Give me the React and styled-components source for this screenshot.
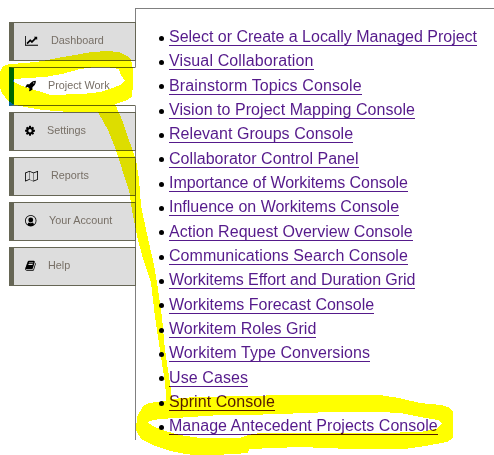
import React from "react";
import styled, { createGlobalStyle } from "styled-components";

const GlobalStyle = createGlobalStyle`
  * { box-sizing: border-box; }
  body { margin: 0; background: #fff; overflow: hidden; }
`;

const Page = styled.div`
  position: relative;
  display: flex;
  align-items: flex-start;
  width: 494px;
  height: 455px;
  padding: 8px 0 0 9px;
  overflow: hidden;
  background: #fff;
  font-family: "Liberation Sans", Arial, sans-serif;
`;

const Tabs = styled.nav`
  display: flex;
  flex-direction: column;
  gap: 6px;
  flex: none;
  width: 127px;
  margin: 14px -1px 0 0;
  z-index: 1;
`;

const Tab = styled.a`
  display: flex;
  align-items: center;
  height: 39px;
  padding: 0 0 2px 11px;
  border: 1px solid #666655;
  border-left: 5px solid ${(p) => (p.$active ? "#0065a0" : "#666655")};
  border-right-color: ${(p) => (p.$active ? "#fff" : "#666655")};
  background: ${(p) => (p.$active ? "#fff" : "#ddd")};
  color: #776f66;
  font-size: 10.8px;
  line-height: 13px;
  text-decoration: none;
  white-space: nowrap;
`;

const TabIcon = styled.svg`
  flex: none;
  width: ${(p) => p.$width}px;
  height: 11.5px;
  margin-right: ${(p) => p.$gap}px;
  fill: #000;
  overflow: visible;
`;

const Panel = styled.main`
  flex: 1;
  height: 432px;
  padding-top: 16.1px;
  border-top: 1px solid #808080;
  border-left: 1px solid #808080;
`;

const LinkList = styled.ul`
  margin: 0;
  padding: 0 0 0 33px;
  list-style: none;
`;

const LinkRow = styled.li`
  position: relative;
  height: 24.34px;
  font-size: 16px;
  line-height: 24px;
  white-space: nowrap;

  &::before {
    content: "";
    position: absolute;
    left: -10px;
    top: 10.6px;
    width: 5px;
    height: 5px;
    border-radius: 50%;
    background: #000;
  }
`;

const ConsoleLink = styled.a`
  color: #551a8b;
  letter-spacing: ${(p) => p.$tracking || 0}px;
  text-decoration: none;
  border-bottom: 1px solid #551a8b;
`;

const Marker = styled.svg`
  position: absolute;
  inset: 0;
  width: 494px;
  height: 455px;
  z-index: 2;
  pointer-events: none;
  mix-blend-mode: multiply;
`;

const tabs = [
  {
    label: "Dashboard",
    box: "0 0 2048 1792",
    width: 13,
    gap: 13,
    path: "M2048 1536v128h-2048v-1536h128v1408h1920zm-128-1248v435q0 21-19.5 29.5t-35.5-7.5l-121-121-633 633q-10 10-23 10t-23-10l-233-233-416 416-192-192 585-585q10-10 23-10t23 10l233 233 464-464-121-121q-16-16-7.5-35.5t29.5-19.5h435q14 0 23 9t9 23z",
  },
  {
    label: "Project Work",
    box: "0 0 1664 1792",
    width: 11,
    gap: 12,
    active: true,
    path: "M1440 448q0-40-28-68t-68-28-68 28-28 68 28 68 68 28 68-28 28-68zm224-288q0 249-75.5 430.5t-253.5 360.5q-81 80-195 176l-20 379q-2 16-16 26l-384 224q-7 4-16 4-12 0-23-9l-64-64q-13-14-8-32l85-276-281-281-276 85q-3 1-9 1-14 0-23-9l-64-64q-17-19-5-39l224-384q10-14 26-16l379-20q96-114 176-195 188-187 358-258t431-71q14 0 24 9.5t10 22.5z",
  },
  {
    label: "Settings",
    box: "128 0 1536 1792",
    width: 10,
    gap: 12,
    path: "M1152 896q0-106-75-181t-181-75-181 75-75 181 75 181 181 75 181-75 75-181zm512-109v222q0 12-8 23t-20 13l-185 28q-19 54-39 91 35 50 107 138 10 12 10 25t-9 23q-27 37-99 108t-94 71q-12 0-26-9l-138-108q-44 23-91 38-16 136-29 186-7 28-36 28h-222q-14 0-24.5-8.5t-11.5-21.5l-28-184q-49-16-90-37l-141 107q-10 9-25 9-14 0-25-11-126-114-165-168-7-10-7-23 0-12 8-23 15-21 51-66.5t54-70.5q-27-50-41-99l-183-27q-13-2-21-12.5t-8-23.5v-222q0-12 8-23t19-13l186-28q14-46 39-92-40-57-107-138-10-12-10-24 0-10 9-23 26-36 98.5-107.5t94.5-71.5q13 0 26 10l138 107q44-23 91-38 16-136 29-186 7-28 36-28h222q14 0 24.5 8.5t11.5 21.5l28 184q49 16 90 37l142-107q9-9 24-9 13 0 25 10 129 119 165 170 7 8 7 22 0 12-8 23-15 21-51 66.5t-54 70.5q26 50 41 98l183 28q13 2 21 12.5t8 23.5z",
  },
  {
    label: "Reports",
    box: "0 0 2048 1792",
    width: 13,
    gap: 13,
    path: "M2020 139q28 20 28 53v1280q0 44-40 59l-640 256q-24 11-48 0l-616-246-616 246q-10 5-24 5-19 0-36-11-28-20-28-53V448q0-44 40-59l640-256q24-11 48 0l616 246 616-246q32-13 60 6zM736 270v1210l576 230V500zM128 491v1142l544-217V274zm1792 938V287l-544 217v1142z",
  },
  {
    label: "Your Account",
    box: "0 0 1792 1792",
    width: 11.5,
    gap: 12.5,
    path: "M896 0a896 896 0 1 0 0 1792a896 896 0 1 0 0-1792zM1399 1478q-65-310-254-310q-102 108-249 108t-249-108q-189 0-254 310A768 768 0 1 1 1399 1478zM1280 768a384 384 0 1 0-768 0a384 384 0 1 0 768 0z",
  },
  {
    label: "Help",
    box: "0 0 1664 1792",
    width: 11,
    gap: 12,
    path: "M1639 478q40 57 18 129l-275 906q-19 64-76.5 107.5t-122.5 43.5h-923q-77 0-148.5-53.5t-99.5-131.5q-24-67-2-127 0-4 3-27t4-37q1-8-3-21.5t-3-19.5q2-11 8-21t16.5-23.5 16.5-23.5q23-38 45-91.5t30-91.5q3-10 .5-30t-.5-28q3-11 17-28t17-23q21-36 42-92t25-90q1-9-2.5-32t.5-28q4-13 22-30.5t22-22.5q19-26 42.5-84.5t27.5-96.5q1-8-3-25.5t-2-26.5q2-8 9-18t18-23 17-21q8-12 16.5-30.5t15-35 16-36 19.5-32 26.5-23.5 36-11.5 47.5 5.5l-1 3q38-9 51-9h761q74 0 114 56t18 130l-274 906q-36 119-71.5 153.5t-128.5 34.5h-869q-27 0-38 15-11 16-1 43 24 70 144 70h923q29 0 56-15.5t35-41.5l300-987q7-22 5-57 38 15 59 43zm-1064 2q-4 13 2 22.5t20 9.5h608q13 0 25.5-9.5t16.5-22.5l21-64q4-13-2-22.5t-20-9.5h-608q-13 0-25.5 9.5t-16.5 22.5zm-83 256q-4 13 2 22.5t20 9.5h608q13 0 25.5-9.5t16.5-22.5l21-64q4-13-2-22.5t-20-9.5h-608q-13 0-25.5 9.5t-16.5 22.5z",
  },
];

const links = [
  { text: "Select or Create a Locally Managed Project", tracking: -0.015 },
  { text: "Visual Collaboration", tracking: 0.13 },
  { text: "Brainstorm Topics Console", tracking: 0.11 },
  { text: "Vision to Project Mapping Console", tracking: 0.05 },
  { text: "Relevant Groups Console", tracking: 0.04 },
  { text: "Collaborator Control Panel", tracking: 0.04 },
  { text: "Importance of Workitems Console", tracking: -0.06 },
  { text: "Influence on Workitems Console" },
  { text: "Action Request Overview Console", tracking: 0.03 },
  { text: "Communications Search Console", tracking: 0.05 },
  { text: "Workitems Effort and Duration Grid", tracking: -0.06 },
  { text: "Workitems Forecast Console" },
  { text: "Workitem Roles Grid" },
  { text: "Workitem Type Conversions", tracking: 0.06 },
  { text: "Use Cases", tracking: 0.1 },
  { text: "Sprint Console", tracking: 0.07 },
  { text: "Manage Antecedent Projects Console", tracking: 0.03 },
];

export default function App() {
  return (
    <Page>
      <GlobalStyle />
      <Tabs>
        {tabs.map((t) => (
          <Tab key={t.label} $active={t.active}>
            <TabIcon viewBox={t.box} $width={t.width} $gap={t.gap} aria-hidden="true">
              <path d={t.path} fillRule="evenodd" />
            </TabIcon>
            {t.label}
          </Tab>
        ))}
      </Tabs>
      <Panel>
        <LinkList>
          {links.map((link) => (
            <LinkRow key={link.text}>
              <ConsoleLink $tracking={link.tracking}>{link.text}</ConsoleLink>
            </LinkRow>
          ))}
        </LinkList>
      </Panel>
      <Marker viewBox="0 0 494 455" shapeRendering="crispEdges" aria-hidden="true">
        <g fill="#ff0" fillRule="evenodd">
          <path d="M0 72L3 66L10 64L25 63L43 61L57 58L75 55L92 52L107 51L119 52L127 56L131 60L133 69L133 83L132 97L125 101L115 104L123 122L130 143L136 160L139 179L141 205L144 220L149 243L154 265L157 283L162 317L165 350L170 383L172 399L195 397L290 395L380 395L399 398L420 403L441 405L448 407L453 412L453 438L447 442L425 446L405 449L350 449L300 447L249 449L248 453L233 454L215 455L195 455L185 454L170 451L155 446L141 439L136 430L137 417L143 406L149 403L166 401L166 395L165 383L160 350L155 317L151 283L142 255L138 240L132 210L129 190L122 169L116 150L108 130L98 112L70 112L43 110L25 107L15 105L8 101L2 93L0 87ZM12 81L22 86L38 91L50 95L82 94L100 92L110 89L120 85L125 81L121 75L119 69L107 67L95 67L80 69L62 74L45 77L27 78L14 79ZM148 423L155 427L165 431L180 435L200 438L240 438L248 435L260 433L300 433L340 433L380 433L420 432L436 429L442 424L438 420L420 417L400 413L380 412L330 412L305 413L280 414L245 415L220 415L190 417L160 419L149 421Z" />
        </g>
      </Marker>
    </Page>
  );
}
